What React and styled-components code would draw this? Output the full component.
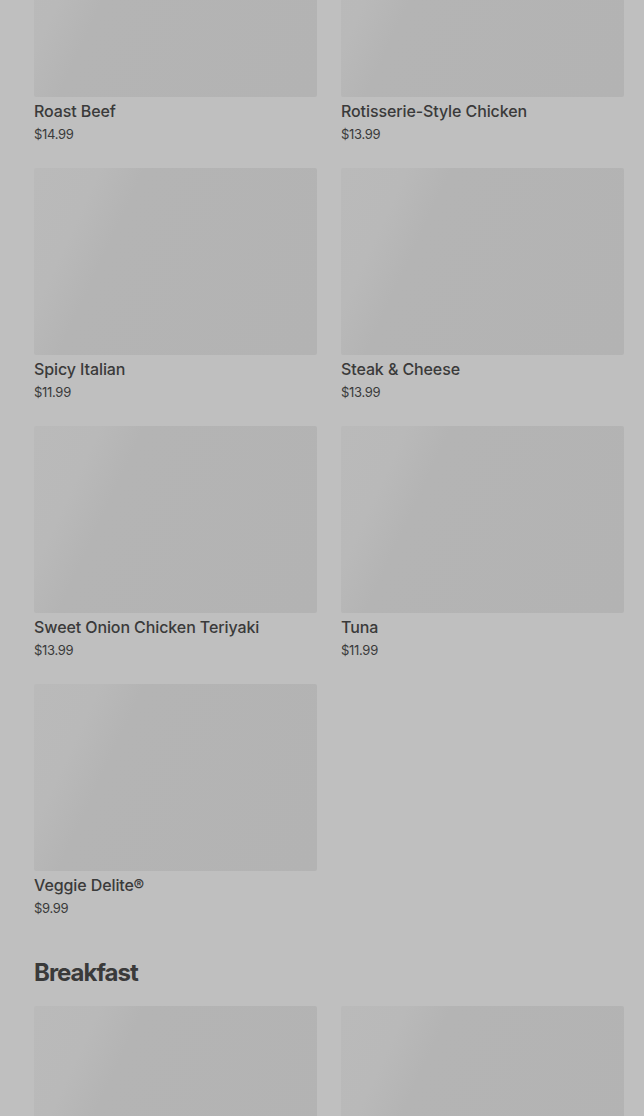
import styled, { createGlobalStyle } from "styled-components";

const sandwiches = [
    { name: "Roast Beef", price: "$14.99" },
    { name: "Rotisserie-Style Chicken", price: "$13.99" },
    { name: "Spicy Italian", price: "$11.99" },
    { name: "Steak & Cheese", price: "$13.99" },
    { name: "Sweet Onion Chicken Teriyaki", price: "$13.99" },
    { name: "Tuna", price: "$11.99" },
    { name: "Veggie Delite®", price: "$9.99" },
];

const breakfast = [
    { name: "Bacon, Egg & Cheese", price: "$7.49" },
    { name: "Black Forest Ham, Egg & Cheese", price: "$7.49" },
];

function MenuItem({ name, price }) {
    return (
        <Card>
            <Photo />
            <Name>{name}</Name>
            <Price>{price}</Price>
        </Card>
    );
}

export default function App() {
    return (
        <>
            <GlobalStyle />
            <Page>
                <Section>
                    <Grid>
                        {sandwiches.map((item) => <MenuItem key={item.name} {...item} />)}
                    </Grid>
                </Section>
                <Section>
                    <Heading>Breakfast</Heading>
                    <Grid>
                        {breakfast.map((item) => <MenuItem key={item.name} {...item} />)}
                    </Grid>
                </Section>
            </Page>
        </>
    );
}

const GlobalStyle = createGlobalStyle`
    html, body {
        margin: 0;
        padding: 0;
        background: #bfbfbf;
        font-family: Inter, "Noto Sans", sans-serif;
        color: #3a3a3a;
        overflow: hidden;
        height: 1116px;
    }
`
const Page = styled.main`
    height: 1116px;
    overflow: hidden;
    padding: 0 20px 0 34px;
`
// list is scrolled part way down, first row of photos is cut at the top
const Section = styled.section`
    display: flex;
    flex-direction: column;
    margin-bottom: 37px;

    &:first-child {
        margin-top: -90px;
    }
`
const Heading = styled.h2`
    margin: 0 0 17px;
    font-size: 24px;
    line-height: 32px;
    font-weight: 700;
    letter-spacing: -1px;
`
const Grid = styled.div`
    display: grid;
    grid-template-columns: 283px 283px;
    column-gap: 24px;
    row-gap: 22px;
`
const Card = styled.div`
    display: flex;
    flex-direction: column;
`
const Photo = styled.div`
    height: 187px;
    border-radius: 2px;
    background: linear-gradient(115deg, #bababa 0%, #b9b9b9 18%, #b4b4b4 30%, #b3b3b3 100%);
`
const Name = styled.h3`
    margin: 3px 0 0;
    font-size: 16px;
    line-height: 22px;
    font-weight: 500;
    letter-spacing: -0.1px;
`
const Price = styled.span`
    font-size: 13px;
    line-height: 24px;
    letter-spacing: -0.3px;
`
